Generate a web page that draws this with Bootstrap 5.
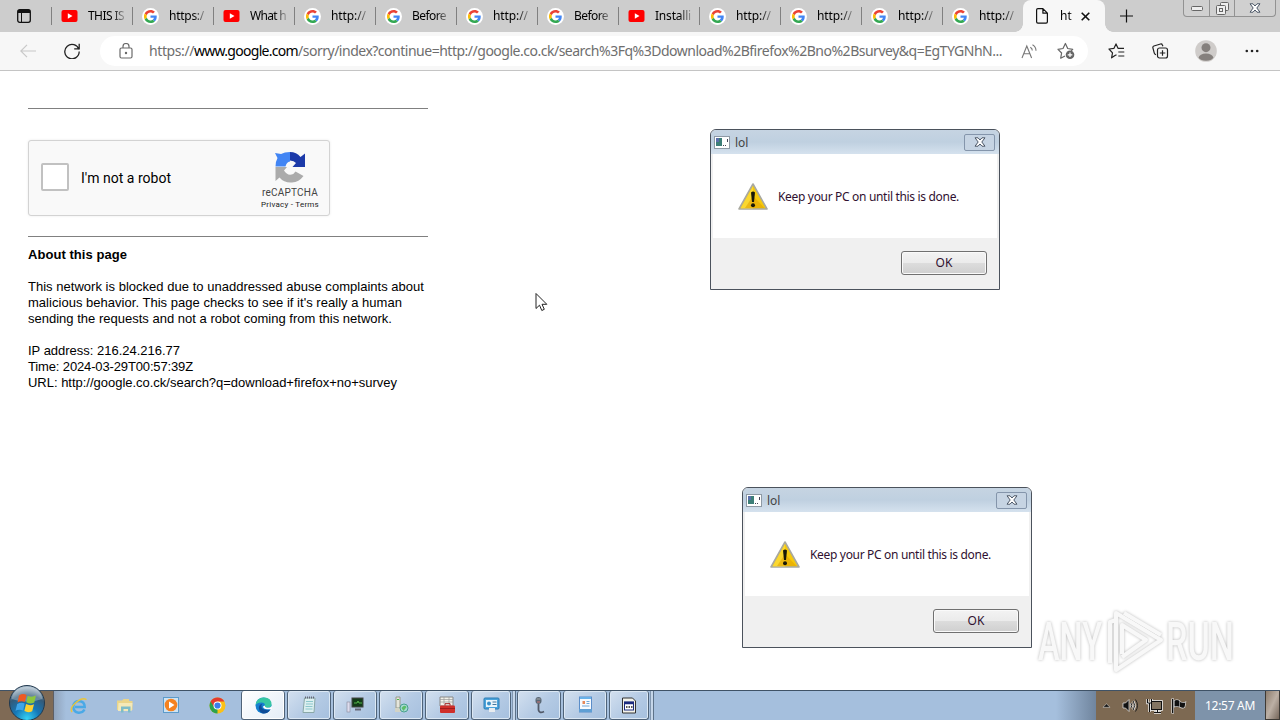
<!DOCTYPE html>
<html lang="en">
<head>
  <meta charset="UTF-8" />
  <meta name="viewport" content="width=device-width, initial-scale=1" />
  <title>https://www.google.com/sorry/index</title>
  <link href="https://cdn.jsdelivr.net/npm/bootstrap@5.3.3/dist/css/bootstrap.min.css" rel="stylesheet" />
  <style>
    body { width: 1280px; height: 720px; overflow: hidden; background: #fff; color: #000; font-family: "Noto Sans", "Open Sans", sans-serif; font-size: 12px; line-height: 16px; }
    svg { display: block; flex: none; }

    /* tab strip */
    .tabstrip { height: 32px; background: #cdcdcd; }
    .strip-menu { width: 51px; padding-left: 17px; }
    .tab-item { width: 81px; padding-left: 10px; position: relative; }
    .tab-item::before { content: ""; position: absolute; left: 0; top: 7px; width: 1px; height: 18px; background: #808080; }
    .tab-title { width: 37px; margin-left: 10px; white-space: nowrap; -webkit-mask-image: linear-gradient(90deg, #000 65%, rgba(0,0,0,.2)); mask-image: linear-gradient(90deg, #000 65%, rgba(0,0,0,.2)); }
    .fav-g { width: 17px; height: 17px; border-radius: 50%; background: #fff; padding: 2px; }
    .tab-active { width: 82px; background: #f7f7f7; border-radius: 8px 8px 0 0; position: relative; padding-left: 12px; }
    .tab-active::before, .tab-active::after { content: ""; position: absolute; bottom: 0; width: 8px; height: 8px; }
    .tab-active::before { left: -8px; background: radial-gradient(circle at 0 0, #cdcdcd 7.5px, #f7f7f7 8px); }
    .tab-active::after { right: -8px; background: radial-gradient(circle at 100% 0, #cdcdcd 7.5px, #f7f7f7 8px); }
    .win-ctl { width: 93px; height: 17px; margin-right: 4px; border: 1px solid #929292; border-top: 0; border-radius: 0 0 4px 4px; background: #d0d0d0; }
    .win-ctl > div + div { border-left: 1px solid #929292; }

    /* address bar */
    .toolbar { height: 39px; background: #f7f7f7; border-bottom: 1px solid #c4c4c4; }
    .omnibox { width: 988px; height: 30px; border-radius: 15px; background: #fff; padding-left: 19px; }
    .url-text { font-size: 14px; line-height: 20px; white-space: pre; color: #6e6e6e; margin-left: 16px; width: 853px; }

    /* page */
    .sorry { width: 400px; margin-left: 28px; padding-top: 37px; font: 13px/16px "Liberation Sans", Arial, sans-serif; }
    .rule { height: 1px; background: #808080; }
    .rc-box { width: 302px; height: 76px; margin: 31px 0 20px; background: #f9f9f9; border: 1px solid #d3d3d3; border-radius: 3px; box-shadow: 0 0 3px rgba(0,0,0,.08); padding-left: 12px; }
    .rc-check { width: 28px; height: 28px; border: 2px solid #c1c1c1; border-radius: 2px; background: #fff; margin-top: -2px; }
    .rc-label { font: 14px/17px Roboto, sans-serif; margin-left: 12px; }
    .rc-brand { width: 78px; padding-top: 9px; font-family: Roboto, sans-serif; color: #444; }
    .rc-name { font-size: 10px; line-height: 12px; margin-top: 3px; }
    .rc-links { font-size: 8px; line-height: 12px; color: #222; }

    /* message boxes float over the page */
    .msgbox { position: absolute; width: 290px; height: 161px; border: 1px solid #4b525c; border-radius: 6px 6px 0 0; background: #f0f0f0; overflow: hidden; }
    .msg-title { height: 24px; background: linear-gradient(#c6d4e2, #bfd0e0 50%, #d5e2ee); padding-left: 3px; color: #444; }
    .msg-title span { padding-top: 2px; margin-left: 5px; }
    .msg-close { width: 31px; height: 17px; border: 1px solid #8495ab; border-radius: 2px; margin-right: 4px; background: #c6d4e3; }
    .msg-body { height: 84px; margin: 0 2px; background: #fff; padding: 2px 0 0 24px; color: #301030; }
    .msg-ok { width: 86px; height: 24px; padding: 0; border: 1px solid #707070; border-radius: 3px; background: linear-gradient(#f3f3f3, #ebebeb 48%, #dcdcdc 52%, #cfcfcf); font-size: 12px; line-height: 20px; color: #301030; box-shadow: inset 0 0 0 1px #fafafa; }
    .overlay-mark { position: absolute; left: 1030px; top: 604px; filter: drop-shadow(0 0 1.5px rgba(0,0,0,.28)); }
    .pointer { position: absolute; left: 535px; top: 292px; }

    /* taskbar */
    .taskbar { height: 30px; background: #a5bfdd; border-top: 1px solid #3f5266; position: relative; }
    .start-zone { width: 54px; background: #7f6a55; box-shadow: inset -1px 0 #5d5f66; }
    .orb { position: absolute; left: 8px; top: -7px; }
    .quick { width: 187px; background: linear-gradient(90deg, #90a3bb, #a5bfdd 12px); }
    .quick > div { width: 46px; }
    .quick > div:first-child { margin-left: 2px; }
    .task { width: 44px; margin-right: 2px; border: 1px solid #4f6379; border-top: 0; border-radius: 3px; background: linear-gradient(135deg, #d3e0ef, #b4cae4 55%, #a6c0de); box-shadow: inset 0 0 0 1px #dce8f4; }
    .task-on { background: linear-gradient(135deg, #fff, #e4edf7); box-shadow: inset 0 0 0 1px #fff; }
    .task-last { width: 40px; margin-right: 1px; }
    .stack-edge { width: 4px; border-right: 1px solid #5d7289; border-left: 1px solid #8197b0; margin-right: 1px; background: #c5d6e9; }
    .tray-fade { width: 40px; background: linear-gradient(90deg, #a5bfdd, #70859e); }
    .tray { width: 99px; background: #7d6952; }
    .clock { width: 70px; background: #7e93aa; color: #fff; font-size: 12px; white-space: nowrap; }
    .peek { width: 15px; border: 1px solid #3e3a35; border-top: 0; background: linear-gradient(115deg, #8d7d6e, #bcb0a5 50%, #76665a); }
  </style>
</head>
<body class="d-flex flex-column">

  <!-- shared icons -->
  <svg width="0" height="0" class="position-absolute">
    <symbol id="yt" viewBox="0 0 16 12"><rect width="16" height="12" rx="2" fill="#f00"/><path d="M6.300 3.300v5.400L11 6z" fill="#fff"/></symbol>
    <symbol id="gg" viewBox="0 0 48 48">
      <path fill="#ea4335" d="M24 9.500c3.500 0 6.700 1.200 9.200 3.600l6.900-6.900C35.900 2.400 30.500 0 24 0 14.600 0 6.500 5.400 2.600 13.200l8 6.200C12.400 13.700 17.700 9.500 24 9.500z"/>
      <path fill="#4285f4" d="M47 24.600c0-1.600-.2-3.100-.4-4.600H24v9h12.900c-.6 3-2.200 5.500-4.700 7.200l7.700 6C44.400 38 47 31.800 47 24.600z"/>
      <path fill="#fbbc05" d="M10.500 28.600a14.500 14.500 0 0 1 0-9.200l-8-6.200a24 24 0 0 0 0 21.600z"/>
      <path fill="#34a853" d="M24 48c6.500 0 11.900-2.100 15.900-5.800l-7.700-6c-2.200 1.500-4.900 2.300-8.200 2.300-6.300 0-11.600-4.200-13.500-9.900l-8 6.200C6.500 42.600 14.600 48 24 48z"/>
    </symbol>
    <symbol id="warn" viewBox="0 0 32 30">
      <path d="M16 2 30 27H2z" fill="#f6c90c" stroke="#a9a9a0" stroke-width="1.600" stroke-linejoin="round"/>
      <path d="M16 4v22.500H3.500z" fill="#ffe24a" opacity=".6"/>
      <path d="M16 14 27.500 26H8z" fill="#e0a000" opacity=".55"/>
      <path d="M14 10.500q2-2 4 0l-1 9.500h-2z" fill="#181808"/><circle cx="16" cy="23.300" r="2" fill="#181808"/>
    </symbol>
    <symbol id="appwin" viewBox="0 0 16 13">
      <rect x=".5" y=".5" width="15" height="12" fill="#fff" stroke="#8e9aa5"/><rect x="2" y="2" width="6" height="8" fill="#3d7f78"/><path d="M2 2h3v4H2z" fill="#5b6faa"/><path d="M9 9.500h1m1 0h1M13.500 3v3" stroke="#445"/>
    </symbol>
    <symbol id="closex" viewBox="0 0 12 10"><path d="M1 .8h3L6 3l2-2.200h3L7.800 5 11 9.200H8L6 7 4 9.200H1L4.200 5z" fill="#fff" stroke="#4b5666"/></symbol>
  </svg>

  <div class="tabstrip d-flex">
    <div class="strip-menu d-flex align-items-center">
      <svg width="14" height="14" viewBox="0 0 14 14" fill="none" stroke="#111"><rect x=".7" y=".7" width="12.600" height="12.600" rx="2" stroke-width="1.300"/><path d="M1 2.500h12" stroke-width="3"/><path d="M4.500 3v10"/></svg>
    </div>
    <div class="d-flex" id="tabs"></div>
    <div class="tab-active d-flex align-items-center">
      <svg width="14" height="16" viewBox="0 0 14 16" fill="none" stroke="#111" stroke-width="1.200" stroke-linejoin="round"><path d="M1.600 2q0-1.300 1.300-1.300h5l4.500 4.500v8.600q0 1.300-1.300 1.300H2.900q-1.300 0-1.300-1.300zM7.900.7v4.500h4.500"/></svg>
      <div class="tab-title" style="width:14px;margin-left:11px">ht</div>
      <svg style="margin-left:7px" width="9" height="9" viewBox="0 0 9 9" stroke="#111" stroke-width="1.600"><path d="M.7.7l7.600 7.600M8.300.7.7 8.300"/></svg>
    </div>
    <div class="d-flex align-items-center" style="padding-left:15px">
      <svg width="13" height="14" viewBox="0 0 13 14" stroke="#111" stroke-width="1.200"><path d="M6.500.5v13M0 7h13"/></svg>
    </div>
    <div class="win-ctl d-flex ms-auto">
      <div class="d-flex align-items-center justify-content-center" style="width:25px"><svg width="12" height="5" viewBox="0 0 12 5"><rect x=".5" y=".5" width="11" height="4" rx="1" fill="#eee" stroke="#666"/></svg></div>
      <div class="d-flex align-items-center justify-content-center" style="width:25px"><svg width="13" height="13" viewBox="0 0 13 13" fill="#eee" stroke="#666"><rect x="4.500" y=".5" width="8" height="8" rx="1"/><rect x=".5" y="3.500" width="9" height="9" rx="1"/><rect x="3.500" y="6.500" width="3" height="3"/></svg></div>
      <div class="flex-fill d-flex align-items-center justify-content-center"><svg width="12" height="10"><use href="#closex"/></svg></div>
    </div>
  </div>

  <div class="toolbar d-flex align-items-center">
    <svg style="margin-left:20px" width="16" height="14" viewBox="0 0 16 14" fill="none" stroke="#c8c8c8" stroke-width="1.200"><path d="M16 7H1M7 .8.8 7 7 13.200"/></svg>
    <svg style="margin-left:28px" width="16" height="16" viewBox="0 0 16 16" fill="none" stroke="#222" stroke-width="1.300"><path d="M14.900 6.500A7.200 7.200 0 1 0 15.200 8.500M15.200.8v5h-5"/></svg>
    <div class="omnibox d-flex align-items-center" style="margin-left:20px">
      <svg width="14" height="16" viewBox="0 0 14 16" fill="none" stroke="#6a6a6a" stroke-width="1.200"><rect x="1" y="5" width="12" height="10" rx="1.500"/><path d="M4 5V3.500a3 3 0 0 1 6 0V5"/><circle cx="7" cy="10" r=".6" fill="#6a6a6a"/></svg>
      <div class="url-text"><span id="u1">https://</span><span id="u2" class="text-black">www.google.com</span><span id="u3">/sorry/index?continue=http://google.co.ck/search%3Fq%3Ddownload%2Bfirefox%2Bno%2Bsurvey&amp;q=EgTYGNhN...</span></div>
      <svg style="margin-left:19px" width="17" height="15" viewBox="0 0 17 15" fill="none" stroke="#777" stroke-width="1.100"><path d="M1 14 5.800 2 10.600 14M2.800 9.800h6M9.300 3.300q2 1 2 3.300M11.500.8q3.500 2 3.500 6"/></svg>
      <svg style="margin-left:19px" width="19" height="18" viewBox="0 0 19 18" fill="none" stroke="#666" stroke-width="1.200" stroke-linejoin="round"><path d="M8 14 3.700 16.200l.9-5.200L1 7.300l5-.8L8.400 1.500l2.300 5 5 .8-1.500 1.500"/><circle cx="13" cy="12.800" r="4.300" fill="#666" stroke="none"/><path d="M13 10.500v4.600M10.700 12.800h4.600" stroke="#fff"/></svg>
    </div>
    <svg style="margin-left:20px" width="17" height="16" viewBox="0 0 17 16" fill="none" stroke="#222" stroke-width="1.200" stroke-linejoin="round"><path d="M7 12.500 3.600 14.800l.9-5L1 6l5-.7L8 .9l2 4.400h6M10.300 9h6M10.300 13h6M6.500 12.800l2-1"/></svg>
    <svg style="margin-left:27px" width="17" height="16" viewBox="0 0 17 16" fill="none" stroke="#222" stroke-width="1.200"><rect x="5.500" y="5" width="10" height="10" rx="2"/><path d="M10.500 7.300v5.500M7.800 10h5.500M4 11.600q-1.400-.3-1.700-1.500L.9 4.800q-.3-1.300 1-1.800L8.500 1q1.400-.3 1.900 1l.5 1.200"/></svg>
    <svg style="margin-left:26px" width="22" height="22" viewBox="0 0 23 23"><circle cx="11.500" cy="11.500" r="11.300" fill="#cfccca"/><circle cx="11.500" cy="8" r="4.700" fill="#85807d"/><ellipse cx="11.500" cy="18" rx="7.500" ry="3.800" fill="#85807d"/></svg>
    <svg style="margin-left:28px" width="14" height="4" viewBox="0 0 14 4" fill="#222"><circle cx="1.800" cy="2" r="1.300"/><circle cx="7" cy="2" r="1.300"/><circle cx="12.200" cy="2" r="1.300"/></svg>
  </div>

  <main class="flex-fill">
    <div class="sorry">
      <div class="rule"></div>
      <div class="rc-box d-flex align-items-center">
        <div class="rc-check"></div>
        <div class="rc-label"><span id="r1">I'm not a robot</span></div>
        <div class="rc-brand ms-auto align-self-start d-flex flex-column align-items-center">
          <svg width="32" height="34" viewBox="0 0 32 34">
            <path d="M16 2v9.500q-3.500.5-4.500 5H1.500q0-5 2-8.500L1 3l6 1Q10.500 2 16 2z" fill="#4285f4"/>
            <path d="M16 2q6.500 0 10.500 5L31 3.500V17H18.500l3.500-4q-2-2.500-6-2.500z" fill="#1c3aa9"/>
            <path d="M1.500 17H13l-3 3.500q3 5 7.500 4 2.500-.5 4-3l8 4.500q-4.500 6-11.500 6.500Q10 33 5.500 27.500l-4 3.500z" fill="#ababab"/>
          </svg>
          <div class="rc-name"><span id="r2">reCAPTCHA</span></div>
          <div class="rc-links"><span id="r3">Privacy - Terms</span></div>
        </div>
      </div>
      <div class="rule"></div>
      <div class="text-nowrap" style="padding-top:10px">
        <b id="p0">About this page</b><br><br>
        <span id="p1">This network is blocked due to unaddressed abuse complaints about</span><br>
        <span id="p2">malicious behavior. This page checks to see if it's really a human</span><br>
        <span id="p3">sending the requests and not a robot coming from this network.</span><br><br>
        <span id="p4">IP address: 216.24.216.77</span><br>
        <span id="p5">Time: 2024-03-29T00:57:39Z</span><br>
        <span id="p6">URL: http://google.co.ck/search?q=download+firefox+no+survey</span>
      </div>
    </div>
  </main>

  <div id="boxes"></div>

  <svg class="pointer" width="13" height="20" viewBox="0 0 13 20"><path d="M1 1.500v15l3.500-3.300 2.300 5.300 2.500-1.200L7 12.300h4.800z" fill="#fff" stroke="#222"/></svg>

  <!-- translucent service mark -->
  <svg class="overlay-mark" width="210" height="74" viewBox="0 0 210 74">
    <g fill="#f8f8f8" font-family="Roboto, sans-serif" font-weight="500" font-size="53">
      <text x="8" y="56" textLength="64" lengthAdjust="spacingAndGlyphs">ANY</text>
      <text x="136" y="56" textLength="68" lengthAdjust="spacingAndGlyphs">RUN</text>
    </g>
    <g fill="none" stroke="#f8f8f8" stroke-width="4" stroke-linejoin="round">
      <path d="M80 59V18l6-2M86 50V9l45 27-45 30V50"/><path d="M92 50V21l24 15-24 17M94 9l37 22"/>
    </g>
  </svg>

  <div class="taskbar d-flex">
    <div class="start-zone"></div>
    <svg class="orb" width="38" height="38" viewBox="0 0 38 38">
      <defs><radialGradient id="og" cx=".5" cy=".95" r=".9"><stop offset="0" stop-color="#35d3f5"/><stop offset=".4" stop-color="#1578b8"/><stop offset=".75" stop-color="#345a78"/><stop offset="1" stop-color="#a8bccb"/></radialGradient></defs>
      <circle cx="19" cy="19" r="17.500" fill="url(#og)" stroke="#22394e"/>
      <path d="M3.500 15Q6 3 19 3t15.500 12Q19 20 3.500 15z" fill="#fff" opacity=".28"/>
      <path d="M11 11.500q4-2.500 7.500-.5l-1.500 7q-4-1.500-7.500.5z" fill="#ee5a22"/>
      <path d="M19.700 11.700q4 2 8.300-.2l-1.700 7q-4.300 2.200-8-.2z" fill="#8cc63e"/>
      <path d="M9.200 20q4-2.200 7.500-.5l-1.600 7q-4-1.700-7.600.3z" fill="#3fa5e8"/>
      <path d="M18 20q4 2.200 8 .2l-1.800 7q-4.200 2-7.800-.2z" fill="#fdd02f"/>
    </svg>
    <div class="quick d-flex">
      <div class="d-flex align-items-center justify-content-center"><svg width="18" height="18" viewBox="0 0 18 18" fill="none"><path d="M14.500 12.500q-2 3.500-6 3.200Q3.500 15 3.300 9.700 3.600 4.300 9 4q5.600.4 5.700 6H5" stroke="#4aa9e6" stroke-width="2.500"/><path d="M2 15Q-.5 11 6 5.500T16.500 2.700" stroke="#e9c53b" stroke-width="1.500"/></svg></div>
      <div class="d-flex align-items-center justify-content-center"><svg width="18" height="16" viewBox="0 0 18 16"><path d="M1 2.500h5L7.500 1H13v2h3.500v9H1z" fill="#ead58a"/><path d="M2.500 5h14l-1 8H2z" fill="#f4e9b8"/><path d="M5 8.500h9.500v6H12V11H7.500v3.500H5z" fill="#7ebdc8"/></svg></div>
      <div class="d-flex align-items-center justify-content-center"><svg width="17" height="17" viewBox="0 0 17 17"><rect x=".5" y=".5" width="15" height="15" fill="#cfe3f2" stroke="#5c9bcb"/><circle cx="8" cy="8" r="6.300" fill="#f58220"/><path d="M6 4.500v7L11.500 8z" fill="#fff"/></svg></div>
      <div class="d-flex align-items-center justify-content-center"><svg width="17" height="17" viewBox="0 0 17 17"><circle cx="8.500" cy="8.500" r="8" fill="#fbc116"/><path d="M8.500 8.500 1.600 4.500a8 8 0 0 0 6.900 12z" fill="#2ba24c"/><path d="M8.500 4.500h6.900a8 8 0 0 0-13.800 0L5 10z" fill="#e33b2e"/><circle cx="8.500" cy="8.500" r="4" fill="#fff"/><circle cx="8.500" cy="8.500" r="3.100" fill="#3b7de8"/></svg></div>
    </div>
    <div class="task task-on d-flex align-items-center justify-content-center"><svg width="17" height="17" viewBox="0 0 17 17"><circle cx="8.500" cy="8.500" r="8" fill="#167fd0"/><path d="M.6 8Q1.500.5 9 .5t7.500 7.200q-.3 3-4 3-3 0-2.500-2Q10 5.500 6.500 5.500 2 5.500.6 8z" fill="#36c6a3"/><path d="M6.500 8q-1 6 8.500 5-3 4.500-8 3.300Q3.200 14 4 10q.5-3 3.500-3.500z" fill="#0e4c98"/><path d="M10 8.500q-.5 2 2.500 2.200 2.700 0 4.300-1.500v3h-4.500Q8 12 8 9.500z" fill="#fff"/></svg></div>
    <div class="task d-flex align-items-center justify-content-center"><svg width="14" height="18" viewBox="0 0 14 18"><path d="M2.500 2H13l-1 14.500H1z" fill="#dceff0" stroke="#8aa8a8"/><path d="M4 5.500h7M4 8h7M3.500 10.500h7M3.500 13h7" stroke="#8cc7cc"/><path d="M3 1.500h10" stroke="#667" stroke-width="2" stroke-dasharray="1 1"/></svg></div>
    <div class="task d-flex align-items-center justify-content-center"><svg width="18" height="16" viewBox="0 0 18 16"><rect x="1" y="5" width="3" height="10" fill="#dde" stroke="#889" stroke-width=".6"/><rect x="6" y="1" width="11" height="9" fill="#123b18" stroke="#444"/><path d="M8 6h3l1-2 1 2h3" fill="none" stroke="#54b54a"/><path d="M9 12.500h6" stroke="#667" stroke-width="2"/></svg></div>
    <div class="task d-flex align-items-center justify-content-center"><svg width="16" height="18" viewBox="0 0 16 18"><path d="M3 1h4v11H3z" fill="#e5e6dc" stroke="#9a9a8c"/><path d="M2 12h6v4H2z" fill="#d2d3c6"/><path d="M4 3.500h2" stroke="#4b4"/><circle cx="11" cy="12" r="4" fill="#a7d9d4" stroke="#48a18e"/><path d="M8.500 12q3-4 5-1l-3 4z" fill="#5cbd69"/></svg></div>
    <div class="task d-flex align-items-center justify-content-center"><svg width="18" height="18" viewBox="0 0 18 18"><path d="M2 1h13v9H2z" fill="#f1f1ea" stroke="#888"/><path d="M2 3.500h13M2 6h13M6 1v7M11 1v7" stroke="#999" stroke-width=".7"/><rect x="2" y="9.500" width="15" height="7.500" rx="1" fill="#cf2f2b"/><path d="M7 9.500V7.700h5v1.800M2 12.500h15" fill="none" stroke="#a01c1c"/></svg></div>
    <div class="task task-last d-flex align-items-center justify-content-center"><svg width="17" height="16" viewBox="0 0 17 16"><rect x="1" y="1" width="15" height="11" rx="1" fill="#4aa4dc" stroke="#2d7cb4"/><path d="M3 3h11v7H3z" fill="#e9f5fb"/><circle cx="6" cy="6.500" r="2" fill="#3c90c8"/><path d="M9.500 5h4M9.500 7.500h4" stroke="#47789d"/><path d="M6 11h6v4H6z" fill="#e8ecef"/></svg></div>
    <div class="stack-edge"></div>
    <div class="task d-flex align-items-center justify-content-center"><svg width="14" height="18" viewBox="0 0 14 18"><rect x="3.500" y="1" width="6" height="7" rx="3" fill="#596775"/><path d="M4.500 3h4" stroke="#aaa"/><path d="M6.500 8v6q1 4 5.500 1.500" fill="none" stroke="#515968" stroke-width="1.800"/><path d="M5 6h3" stroke="#c77"/></svg></div>
    <div class="task d-flex align-items-center justify-content-center"><svg width="15" height="18" viewBox="0 0 15 18"><rect x="1.500" y="1" width="12" height="15" fill="#f7fbff" stroke="#5b8dc9"/><path d="M2 2h11" stroke="#68b2ea" stroke-width="2"/><path d="M8.500 5.500h3M8.500 7.500h3M4 10h7.500" stroke="#72a8d8"/><path d="M4.500 5h2.500v3H4.500z" fill="#e5895a"/><path d="M1 13h13v3H1z" fill="#5f9fd4"/></svg></div>
    <div class="task task-last d-flex align-items-center justify-content-center"><svg width="16" height="17" viewBox="0 0 16 17"><path d="M1.500 1h10l3 3v12h-13z" fill="#f3f3ea" stroke="#333"/><rect x="3.500" y="5" width="9" height="8" fill="#fff" stroke="#1b2a7d"/><path d="M3 6h10" stroke="#1b2a7d" stroke-width="2.500"/><path d="M5 10h1.500M7.500 10H9M10 10h1.500" stroke="#222" stroke-width="1.500"/></svg></div>
    <div class="stack-edge"></div>
    <div class="tray-fade ms-auto"></div>
    <div class="tray d-flex align-items-center">
      <svg style="margin-left:6px" width="9" height="5" viewBox="0 0 10 5"><path d="M1 4.500h8L5 .7z" fill="#111" stroke="#ddd" stroke-width=".6"/></svg>
      <svg style="margin-left:11px" width="17" height="15" viewBox="0 0 17 15" stroke="#eee" stroke-width=".7"><path d="M1 5h2.500L7 1.500v12L3.500 10H1z" fill="#111"/><path d="M9 5q1.500 2.500 0 5M11.200 3q3 4.500 0 9" fill="none" stroke="#eee" stroke-width="2.200"/><path d="M9 5q1.500 2.500 0 5M11.200 3q3 4.500 0 9M13.500 1.500q4 6 0 12" fill="none" stroke="#222" stroke-width="1"/></svg>
      <svg style="margin-left:7px" width="17" height="16" viewBox="0 0 17 16" fill="none"><rect x="5.500" y="3.500" width="10" height="8" stroke="#f2f2f2" stroke-width="2.600"/><path d="M8 14.500h7M11.500 12v2M1.500 1v4h4V1M3.500 5v9" stroke="#eee" stroke-width="2.400"/><rect x="5.500" y="3.500" width="10" height="8" fill="#827462" stroke="#111"/><path d="M8 14.500h7M11.500 12v2M1.500 1v4h4V1M3.500 5v9" stroke="#111"/></svg>
      <svg style="margin-left:8px" width="16" height="16" viewBox="0 0 16 16"><g fill="#111" stroke="#eee" stroke-width="1.200" paint-order="stroke"><path d="M1 1h1.400v14H1z"/><path d="M3.500 2.500q3-1 5 .3v6q-2-1-5-.2zM9 4q3 1.500 5.500.3l-1 5Q11.500 10.500 9 9z"/></g></svg>
    </div>
    <div class="clock d-flex align-items-center justify-content-center"><span id="c1">12:57 AM</span></div>
    <div class="peek"></div>
  </div>

  <script src="https://cdn.jsdelivr.net/npm/bootstrap@5.3.3/dist/js/bootstrap.bundle.min.js"></script>
  <script>
    // fit a run of text to a fixed width by spacing its letters
    function fit(el, width) {
      el.style.letterSpacing = "0";
      const gap = (width - el.getBoundingClientRect().width) / el.textContent.length;
      el.style.letterSpacing = gap + "px";
    }

    const tabs = [
      ["yt", "THIS IS", 36], ["gg", "https:/", 35], ["yt", "What h", 36], ["gg", "http://", 35],
      ["gg", "Before", 34], ["gg", "http://", 35], ["gg", "Before", 34], ["yt", "Installi", 36],
      ["gg", "http://", 35], ["gg", "http://", 35], ["gg", "http://", 35], ["gg", "http://", 35]
    ];
    document.getElementById("tabs").innerHTML = tabs.map(([icon, title]) => `
      <div class="tab-item d-flex align-items-center">
        ${icon === "yt"
          ? '<svg width="17" height="12"><use href="#yt"/></svg>'
          : '<div class="fav-g"><svg width="13" height="13"><use href="#gg"/></svg></div>'}
        <div class="tab-title"><span>${title}</span></div>
      </div>`).join("");
    document.querySelectorAll("#tabs .tab-title span").forEach((el, i) => fit(el, tabs[i][2]));

    const boxes = [[710, 129], [742, 487]];
    document.getElementById("boxes").innerHTML = boxes.map(([x, y]) => `
      <div class="msgbox" style="left:${x}px;top:${y}px">
        <div class="msg-title d-flex align-items-center">
          <svg width="16" height="13"><use href="#appwin"/></svg>
          <span>lol</span>
          <div class="msg-close ms-auto d-flex align-items-center justify-content-center"><svg width="12" height="10"><use href="#closex"/></svg></div>
        </div>
        <div class="msg-body d-flex align-items-center">
          <svg width="32" height="30"><use href="#warn"/></svg>
          <div style="margin-left:9px"><span class="msg-text">Keep your PC on until this is done.</span></div>
        </div>
        <div class="d-flex justify-content-end" style="padding:13px 12px 0 0"><button class="btn msg-ok">OK</button></div>
      </div>`).join("");

    const widths = { u1: 45, u2: 104, u3: 704, r1: 90, r2: 56, r3: 58, p0: 99, p1: 396, p2: 374, p3: 364, p4: 152, p5: 165, p6: 369, c1: 50 };
    for (const id in widths) fit(document.getElementById(id), widths[id]);
    document.querySelectorAll(".msg-text").forEach(el => fit(el, 181));
  </script>
</body>
</html>
